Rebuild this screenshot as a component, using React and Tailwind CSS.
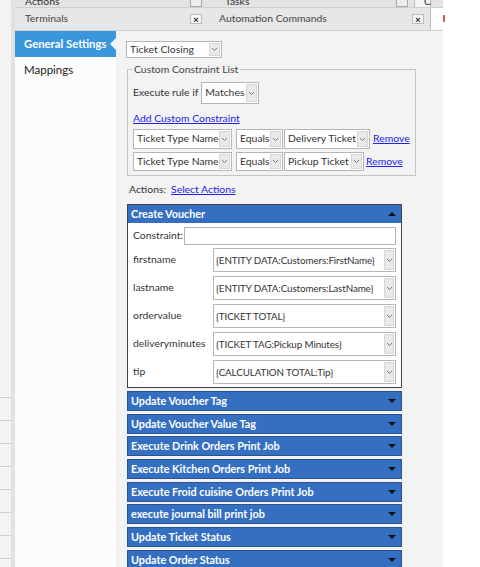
import React from "react";

const Chevron = () => (
  <svg width="7" height="5" viewBox="0 0 7 5" className="block">
    <path d="M1 1 L3.5 3.5 L6 1" fill="none" stroke="#777" strokeWidth="1" />
  </svg>
);

const Select = ({ value, className = "", arrowClass = "w-[11px]", textClass = "px-[3px]" }) => (
  <div
    className={`flex items-stretch min-w-0 bg-white border border-[#b5b5b5] text-[#333] ${className}`}
  >
    <div className={`flex-1 min-w-0 flex items-center whitespace-nowrap overflow-hidden ${textClass}`}>
      {value}
    </div>
    <div
      className={`${arrowClass} shrink-0 my-[1px] mr-[1px] bg-[#e9e9e9] border border-[#d6d6d6] flex items-center justify-center`}
    >
      <Chevron />
    </div>
  </div>
);

const collapsed = [
  "Update Voucher Tag",
  "Update Voucher Value Tag",
  "Execute Drink Orders Print Job",
  "Execute Kitchen Orders Print Job",
  "Execute Froid cuisine Orders Print Job",
  "execute journal bill print job",
  "Update Ticket Status",
  "Update Order Status",
];

const fields = [
  { label: "firstname", value: "{ENTITY DATA:Customers:FirstName}" },
  { label: "lastname", value: "{ENTITY DATA:Customers:LastName}" },
  { label: "ordervalue", value: "{TICKET TOTAL}" },
  { label: "deliveryminutes", value: "{TICKET TAG:Pickup Minutes}" },
  { label: "tip", value: "{CALCULATION TOTAL:Tip}" },
];

const CloseBox = () => (
  <div className="w-[12px] h-[10px] bg-[#f5f5f5] border border-[#bbb] flex items-center justify-center text-[10px] font-bold leading-none text-[#222]">
    ×
  </div>
);

export default function App() {
  return (
    <div className="w-[480px] h-[567px] overflow-hidden bg-white flex font-['Lato',sans-serif] text-[10.4px] text-[#333]">
      {/* left strip */}
      <div className="w-[11px] shrink-0 bg-[#f3f3f3] flex flex-col pt-[397px]">
        {[0, 1, 2, 3, 4, 5, 6, 7].map((i) => (
          <div key={i} className="h-[23px] shrink-0 border-t border-[#cfcfcf]" />
        ))}
      </div>
      <div className="w-[4px] shrink-0 bg-[#e2e2e2]" />

      {/* main column */}
      <div className="w-[428px] shrink-0 flex flex-col min-h-0">
        {/* top tabs (cut off) */}
        <div className="h-[8px] shrink-0 flex border-b border-[#cfcfcf] bg-[#e4e4e4] overflow-hidden">
          <div className="w-[195px] flex items-end justify-between pl-[10px] pr-[8px]">
            <span className="leading-[11px]">Actions</span>
            <div className="w-[12px] h-[7px] border border-[#aaa] border-t-0 bg-[#eee]" />
          </div>
          <div className="w-[204px] flex items-end justify-between pl-[15px] pr-[6px]">
            <span className="leading-[11px]">Tasks</span>
            <div className="w-[12px] h-[7px] border border-[#aaa] border-t-0 bg-[#eee]" />
          </div>
          <div className="w-[17px] border-l border-r border-[#bbb] bg-[#f3f3f3] pl-[9px] flex items-end">
            <span className="leading-[11px]">C</span>
          </div>
        </div>
        <div className="h-[23px] shrink-0 flex bg-[#e7e7e7] border-b border-[#cfcfcf]">
          <div className="w-[195px] flex items-center justify-between pl-[10px] pr-[8px]">
            <span className="text-[#444]">Terminals</span>
            <CloseBox />
          </div>
          <div className="w-[221px] flex items-center justify-between pl-[9px] pr-[6px] border-r border-[#bcbcbc]">
            <span className="text-[#444]">Automation Commands</span>
            <CloseBox />
          </div>
          <div className="flex-1 bg-white" />
        </div>

        {/* body */}
        <div className="flex-1 flex min-h-0 overflow-hidden">
          {/* sidebar */}
          <div className="w-[101px] shrink-0 bg-[#fcfcfc] flex flex-col">
            <div className="relative h-[26px] bg-[#3a97dc] flex items-center pl-[9px] text-white text-[11.3px] font-bold whitespace-nowrap">
              General Settings
              <div className="absolute right-0 top-[7px] w-0 h-0 border-y-[6px] border-y-transparent border-r-[6px] border-r-[#f3f3f3]" />
            </div>
            <div className="h-[26px] flex items-center pl-[9px] text-[11.5px] text-[#222]">
              Mappings
            </div>
          </div>

          {/* content */}
          <div className="flex-1 bg-[#f3f3f3] pl-[10px] pt-[10px] flex flex-col">
            <Select value="Ticket Closing" className="w-[96px] h-[17px] shrink-0" />

            <fieldset className="mt-[5px] ml-[1px] w-[285px] shrink-0 border border-[#c4c4c4] px-[5px] pb-[4px]">
              <legend className="px-[2px] -ml-[1px] text-[#444] leading-[13px]">
                Custom Constraint List
              </legend>
              <div className="flex items-center mt-[6px]">
                <span className="mr-[3px]">Execute rule if</span>
                <Select value="Matches" className="w-[58px] h-[22px]" />
              </div>
              <div className="mt-[7px] leading-[14px] text-[#2222ee] underline">Add Custom Constraint</div>
              <div className="mt-[4px] flex items-center">
                <Select value="Ticket Type Name" className="w-[99px] h-[20px]" />
                <Select value="Equals" className="ml-[4px] w-[47px] h-[20px]" />
                <Select value="Delivery Ticket" className="ml-[1px] w-[86px] h-[20px]" />
                <span className="ml-[3px] text-[#2222ee] underline">Remove</span>
              </div>
              <div className="mt-[3px] flex items-center">
                <Select value="Ticket Type Name" className="w-[99px] h-[19px]" />
                <Select value="Equals" className="ml-[4px] w-[47px] h-[19px]" />
                <Select value="Pickup Ticket" className="ml-[1px] w-[80px] h-[19px]" />
                <span className="ml-[2px] text-[#2222ee] underline">Remove</span>
              </div>
            </fieldset>

            <div className="mt-[6px] ml-[3px] flex items-center gap-[5px] leading-[14px] shrink-0">
              <span>Actions:</span>
              <span className="text-[#2222ee] underline">Select Actions</span>
            </div>

            {/* expanded panel */}
            <div className="mt-[8px] ml-[1px] w-[275px] shrink-0 border border-[#444] bg-white">
              <div className="h-[18px] bg-[#356fc2] flex items-center justify-between pl-[3px] pr-[5px] text-white text-[10.8px] font-bold">
                <span>Create Voucher</span>
                <div className="w-0 h-0 border-x-[4px] border-x-transparent border-b-[4px] border-b-[#111]" />
              </div>
              <div className="px-[5px] pt-[4px] pb-[3px] flex flex-col">
                <div className="flex items-center h-[18px]">
                  <span className="w-[51px] shrink-0">Constraint:</span>
                  <div className="flex-1 h-[18px] bg-white border border-[#b5b5b5]" />
                </div>
                {fields.map((f, i) => (
                  <div
                    key={f.label}
                    className={`flex items-center h-[24px] ${i === 0 ? "mt-[3px]" : "mt-[4px]"}`}
                  >
                    <span className="w-[80px] shrink-0">{f.label}</span>
                    <Select
                      value={f.value}
                      className="flex-1 h-[24px]"
                      arrowClass="w-[10px]"
                      textClass="pl-[2px] text-[9.8px] tracking-[-0.1px]"
                    />
                  </div>
                ))}
              </div>
            </div>

            <div className="mt-[3px] ml-[1px] w-[275px] flex flex-col gap-[2.7px]">
              {collapsed.map((c) => (
                <div
                  key={c}
                  className="h-[20px] shrink-0 bg-[#356fc2] border border-[#2a548f] flex items-center justify-between pl-[3px] pr-[5px] text-white text-[10.8px] font-bold"
                >
                  <span>{c}</span>
                  <div className="w-0 h-0 border-x-[4px] border-x-transparent border-t-[4px] border-t-[#111]" />
                </div>
              ))}
            </div>
          </div>
        </div>
      </div>

      {/* right white area */}
      <div className="flex-1 bg-white pt-[15px]">
        <div className="w-[2px] h-[7px] bg-[#d9603b]" />
      </div>
    </div>
  );
}
